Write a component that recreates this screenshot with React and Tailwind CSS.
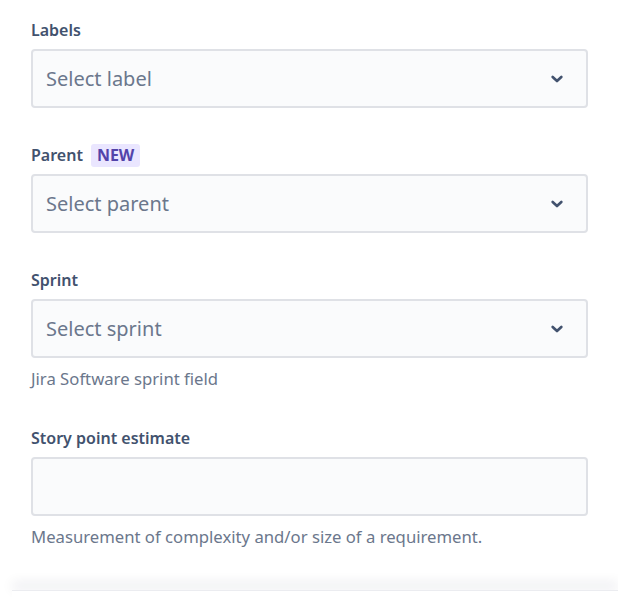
const Chevron = () => (
  <svg width="16" height="16" viewBox="0 0 24 24" className="text-[#42526e]">
    <path d="M5.5 9l6.5 6 6.5-6" fill="none" stroke="currentColor" strokeWidth="4" strokeLinecap="round" strokeLinejoin="round" />
  </svg>
);

const Label = ({ children }) => (
  <div className="flex items-center h-6 gap-2 text-[16px] font-semibold text-[#42526e]">{children}</div>
);

const SelectField = ({ placeholder }) => (
  <div className="mt-[7px] h-[59px] flex items-center justify-between border-2 border-[#dfe1e6] rounded bg-[#fafbfc] pl-[13px] pr-[21px]">
    <span className="text-[20px] text-[#6b778c]">{placeholder}</span>
    <Chevron />
  </div>
);

const Helper = ({ children }) => (
  <div className="mt-[9px] h-6 flex items-center text-[16.7px] text-[#6b778c]">{children}</div>
);

export default function App() {
  return (
    <div className="relative h-[598px] w-[618px] overflow-hidden bg-white" style={{ fontFamily: '"Noto Sans", "Open Sans", sans-serif' }}>
      <div className="pl-[31px] pr-[30px] pt-[18px] flex flex-col">
        <div>
          <Label>Labels</Label>
          <SelectField placeholder="Select label" />
        </div>
        <div className="mt-[35px]">
          <Label>
            Parent
            <span className="rounded-[3px] bg-[#eae6ff] px-[6px] h-[23px] flex items-center text-[16px] font-bold text-[#5243aa]">NEW</span>
          </Label>
          <SelectField placeholder="Select parent" />
        </div>
        <div className="mt-[35px]">
          <Label>Sprint</Label>
          <SelectField placeholder="Select sprint" />
          <Helper>Jira Software sprint field</Helper>
        </div>
        <div className="mt-[35px]">
          <Label>Story point estimate</Label>
          <div className="mt-[7px] h-[59px] border-2 border-[#dfe1e6] rounded bg-[#fafbfc]" />
          <Helper>Measurement of complexity and/or size of a requirement.</Helper>
        </div>
        <div className="mt-[38px]">
          <Label>
            <span>Reporter <span className="text-[#de350b]">*</span></span>
          </Label>
        </div>
      </div>
      <div className="absolute left-[12px] right-0 top-[590px] bottom-0 bg-white shadow-[0_-8px_12px_rgba(9,30,66,0.08)] border-t border-[#ebecf0]" />
    </div>
  );
}
